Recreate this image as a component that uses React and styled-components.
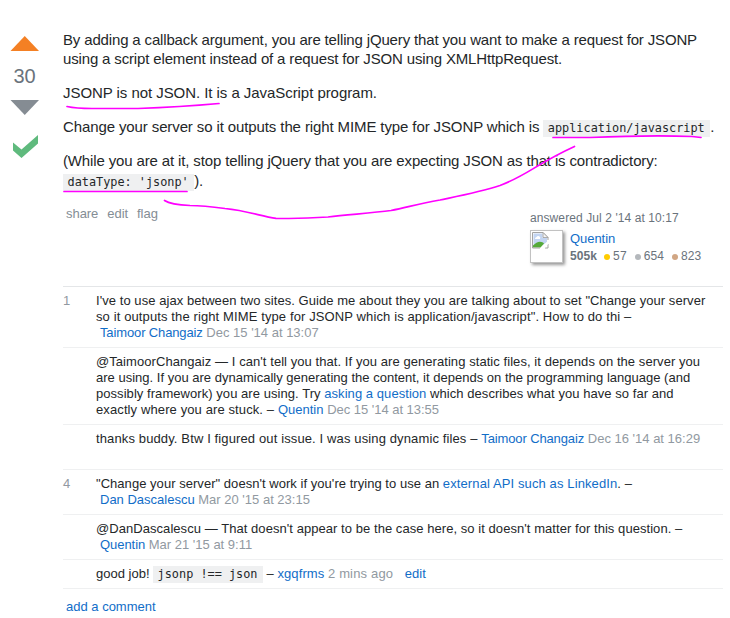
import React from "react";
import styled, { createGlobalStyle } from "styled-components";

const GlobalStyle = createGlobalStyle`
  body {
    margin: 0;
    background: #fff;
    color: #242729;
    font-family: "Liberation Sans", Arial, sans-serif;
    font-size: 15px;
    line-height: 19px;
  }
`;

const Page = styled.main`
  position: relative;
  display: flex;
  width: 730px;
  height: 618px;
  overflow: hidden;
`;

const VoteColumn = styled.aside`
  display: flex;
  flex-direction: column;
  align-items: center;
  width: 49px;
  padding-top: 36px;
  margin-right: 14px;
  flex: none;
  svg { display: block; }
`;

const Score = styled.span`
  height: 49px;
  line-height: 50px;
  font-size: 20px;
  color: #6a737c;
`;

const CheckIcon = styled.svg`
  margin: 20px 0 0 2px;
`;

const Main = styled.article`
  width: 660px;
  padding-top: 30px;
`;

const Body = styled.div`
  height: 175px;
`;

const Paragraph = styled.p`
  margin: 0 0 15px;
`;

const Line = styled.span`
  display: block;
  height: 1lh;
  margin-top: ${(p) => p.$top || 0}px;
  white-space: pre;
  letter-spacing: ${(p) => p.$track || 0}px;
`;

const Code = styled.code`
  display: inline-block;
  box-sizing: border-box;
  height: 17px;
  padding: 0 5.5px 0 4.5px;
  background: #eff0f1;
  color: #242729;
  font: 11.85px/17px "DejaVu Sans Mono", monospace;
  letter-spacing: 0;
  white-space: pre;
`;

const Footer = styled.div`
  display: flex;
  justify-content: space-between;
  height: 81px;
  font-size: 13px;
`;

const Menu = styled.nav`
  display: flex;
  gap: 9px;
  padding: 0 0 0 3px;
  color: #848d95;
  line-height: 18px;
  letter-spacing: -0.05px;
`;

const UserCard = styled.section`
  width: 193px;
  padding-top: 5px;
  color: #6a737c;
  line-height: 17px;
  font-size: 12px;
`;

const UserRow = styled.div`
  display: flex;
  gap: 7px;
  margin-top: 3px;
`;

const Avatar = styled.div`
  box-sizing: border-box;
  width: 33px;
  height: 33px;
  padding: 1px;
  border: 1px solid #c2c2c2;
  box-shadow: 2px 2px 3px #999;
  svg { display: block; }
`;

const UserDetails = styled.div`
  font-size: 12px;
  line-height: 17px;
`;

const Name = styled.a`
  display: block;
  color: #116dc8;
  font-size: 13px;
  letter-spacing: -0.05px;
`;

const Reputation = styled.div`
  display: flex;
  align-items: center;
  white-space: nowrap;
  padding-top: 1px;
  letter-spacing: 0.1px;
`;

const Badge = styled.span`
  display: flex;
  align-items: center;
  gap: 3px;
  margin-left: ${(p) => p.$gap}px;
  &::before {
    content: "";
    width: 6px;
    height: 6px;
    border-radius: 50%;
    background: ${(p) => p.$color};
  }
`;

const Comments = styled.ul`
  margin: 0;
  padding: 0;
  list-style: none;
  border-top: 1px solid #e4e6e8;
  font-size: 13px;
  line-height: 16px;
`;

const CommentItem = styled.li`
  display: grid;
  grid-template-columns: 33px 1fr;
  box-sizing: border-box;
  min-height: ${(p) => p.$minHeight || 0}px;
  padding: 6px 0;
  border-bottom: 1px solid #eff0f1;
`;

const CommentScore = styled.span`
  color: #9199a1;
`;

const Link = styled.a`
  color: #116dc8;
  margin-left: ${(p) => p.$indent || 0}px;
  letter-spacing: ${(p) => (p.$track === undefined ? "inherit" : `${p.$track}px`)};
`;

const DateText = styled.span`
  color: #9199a1;
  letter-spacing: ${(p) => (p.$track === undefined ? "inherit" : `${p.$track}px`)};
`;

const AddComment = styled.a`
  display: block;
  padding: 9px 0 0 3px;
  color: #116dc8;
  font-size: 13px;
  line-height: 18px;
`;

const InkLayer = styled.svg`
  position: absolute;
  inset: 0;
  pointer-events: none;
`;

function Arrow({ down, color }) {
  return (
    <svg width="30" height="15" viewBox="0 0 30 15">
      <path d={down ? "M0.500 0H29L14.750 15Z" : "M0.500 15H29L14.750 0Z"} fill={color} />
    </svg>
  );
}

function BrokenImage() {
  return (
    <svg width="17" height="17" viewBox="0 0 17 17">
      <path d="M.5.5H11L16 5.500V16H.5Z" fill="#fff" />
      <path d="M1.500 1.500H10.500V6H15V10L8 15H1.500Z" fill="#c3d5f2" />
      <path d="M3 7a2 2 0 0 1 1.500-2 2 2 0 0 1 3.500 2Z" fill="#fff" />
      <path d="M1 15.500V13.500Q6 8 11 10.500L12 11.500L8.500 15.500Z" fill="#55aa39" />
      <path d="M16 8V5.500L11 .5H.5V16H8M13 16H16V12" fill="none" stroke="#a3a3a3" />
      <path d="M11 .5V5.500H16Z" fill="#f4f4f4" stroke="#999" strokeWidth=".8" />
      <path d="M8 17L17 8V11L12 17Z" fill="#fff" />
    </svg>
  );
}

export default function App() {
  return (
    <>
      <GlobalStyle />
      <Page>
        <VoteColumn>
          <Arrow color="#f48024" />
          <Score>30</Score>
          <Arrow down color="#858c93" />
          <CheckIcon width="25" height="23" viewBox="0 0 25 23">
            <path d="M0 7.500L8.500 14.500L25 0V8.500L8.500 23L0 15.500Z" fill="#5fba7d" />
          </CheckIcon>
        </VoteColumn>
        <Main>
          <Body>
            <Paragraph>
              <Line $track={-0.155}>By adding a callback argument, you are telling jQuery that you want to make a request for JSONP</Line>
              <Line $track={-0.152}>using a script element instead of a request for JSON using XMLHttpRequest.</Line>
            </Paragraph>
            <Paragraph>
              <Line $track={-0.055}>JSONP is not JSON. It is a JavaScript program.</Line>
            </Paragraph>
            <Paragraph>
              <Line $track={-0.11}>Change your server so it outputs the right MIME type for JSONP which is <Code>application/javascript</Code>.</Line>
            </Paragraph>
            <Paragraph>
              <Line $track={-0.139}>(While you are at it, stop telling jQuery that you are expecting JSON as that is contradictory:</Line>
              <Line $top={1} $track={-0.2}><Code>dataType: 'jsonp'</Code>).</Line>
            </Paragraph>
          </Body>
          <Footer>
            <Menu><span>share</span><span>edit</span><span>flag</span></Menu>
            <UserCard>
              <Line $track={0.09}>answered Jul 2 '14 at 10:17</Line>
              <UserRow>
                <Avatar><BrokenImage /></Avatar>
                <UserDetails>
                  <Name>Quentin</Name>
                  <Reputation>
                    <b>505k</b>
                    <Badge $gap={7} $color="#ffcc01">57</Badge>
                    <Badge $gap={8} $color="#b4b8bc">654</Badge>
                    <Badge $gap={8} $color="#d1a684">823</Badge>
                  </Reputation>
                </UserDetails>
              </UserRow>
            </UserCard>
          </Footer>
          <Comments>
            <CommentItem>
              <CommentScore>1</CommentScore>
              <div>
                <Line $track={0.058}>I've to use ajax between two sites. Guide me about they you are talking about to set "Change your server</Line>
                <Line $track={0.115}>so it outputs the right MIME type for JSONP which is application/javascript". How to do thi –</Line>
                <Line><Link $indent={4} $track={-0.13}>Taimoor Changaiz</Link> <DateText>Dec 15 '14 at 13:07</DateText></Line>
              </div>
            </CommentItem>
            <CommentItem>
              <span />
              <div>
                <Line $track={0.064}>@TaimoorChangaiz — I can't tell you that. If you are generating static files, it depends on the server you</Line>
                <Line $track={0.008}>are using. If you are dynamically generating the content, it depends on the programming language (and</Line>
                <Line $track={0.055}>possibly framework) you are using. Try <Link>asking a question</Link> which describes what you have so far and</Line>
                <Line $track={0.11}>exactly where you are stuck. – <Link $track={0}>Quentin</Link> <DateText $track={-0.03}>Dec 15 '14 at 13:55</DateText></Line>
              </div>
            </CommentItem>
            <CommentItem $minHeight={45}>
              <span />
              <Line $track={0.125}>thanks buddy. Btw I figured out issue. I was using dynamic files – <Link $track={-0.13}>Taimoor Changaiz</Link> <DateText $track={0}>Dec 16 '14 at 16:29</DateText></Line>
            </CommentItem>
            <CommentItem>
              <CommentScore>4</CommentScore>
              <div>
                <Line $track={0.04}>"Change your server" doesn't work if you're trying to use an <Link $track={0.11}>external API such as LinkedIn</Link>. –</Line>
                <Line><Link $indent={4}>Dan Dascalescu</Link> <DateText>Mar 20 '15 at 23:15</DateText></Line>
              </div>
            </CommentItem>
            <CommentItem>
              <span />
              <div>
                <Line $track={0.055}>@DanDascalescu — That doesn't appear to be the case here, so it doesn't matter for this question. –</Line>
                <Line $track={-0.05}><Link $indent={4}>Quentin</Link> <DateText $track={0}>Mar 21 '15 at 9:11</DateText></Line>
              </div>
            </CommentItem>
            <CommentItem>
              <span />
              <Line>good job! <Code>jsonp !== json</Code> – <Link $track={0.1}>xgqfrms</Link> <DateText $track={0.16}>2 mins ago</DateText> <Link $indent={8}>edit</Link></Line>
            </CommentItem>
          </Comments>
          <AddComment>add a comment</AddComment>
        </Main>
        <InkLayer width="730" height="618" fill="none" stroke="#f0f" strokeWidth="1.7" strokeLinecap="round">
          <path d="M67 106.500Q76 108.500 92 108.500H138Q180 107 219 103.500" />
          <path d="M64 191.500H187" />
          <path d="M553 137.500H590Q650 135 692 136.500L701 137.500" />
          <path d="M164.500 200.500C169 203.500 178 205 190 205.500C203 205.500 214 207 225 208.500C248 211 262 216.500 276 218.300Q300 219 328 217C350 214.500 372 213 391 210.500C407 207.500 417 204 440 200C464 195 480 192 500 185.500C528 175 536 164 574.500 146.500" />
        </InkLayer>
      </Page>
    </>
  );
}
